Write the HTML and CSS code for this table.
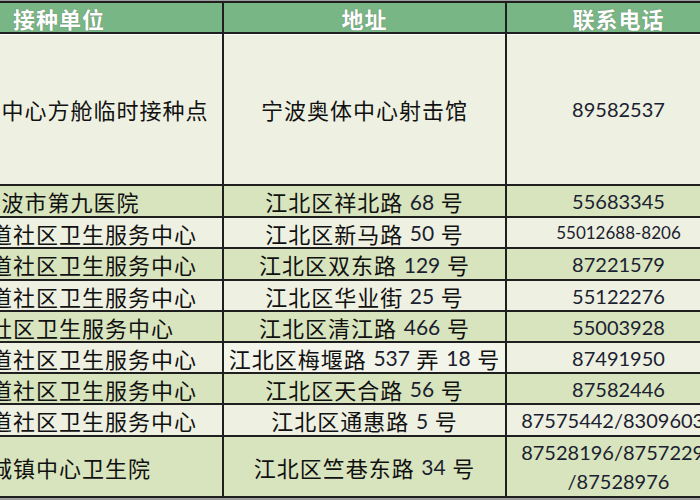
FILE: index.html
```html
<!DOCTYPE html>
<html lang="zh">
<head>
<meta charset="utf-8">
<title>接种单位</title>
<link rel="stylesheet" href="styles.css">
</head>
<body>
<div class="sheet">
  <div class="cell head">接种单位</div>
  <div class="cell head">地址</div>
  <div class="cell head">联系电话</div>

  <div class="cell light first">宁波奥体中心方舱临时接种点</div>
  <div class="cell light first">宁波奥体中心射击馆</div>
  <div class="cell light first num">89582537</div>

  <div class="cell green">宁波市第九医院</div>
  <div class="cell green">江北区祥北路 <span class="n">68</span> 号</div>
  <div class="cell green num">55683345</div>

  <div class="cell light">白沙街道社区卫生服务中心</div>
  <div class="cell light">江北区新马路 <span class="n">50</span> 号</div>
  <div class="cell light num small">55012688-8206</div>

  <div class="cell green">甬江街道社区卫生服务中心</div>
  <div class="cell green">江北区双东路 <span class="n">129</span> 号</div>
  <div class="cell green num">87221579</div>

  <div class="cell light">洪塘街道社区卫生服务中心</div>
  <div class="cell light">江北区华业街 <span class="n">25</span> 号</div>
  <div class="cell light num">55122276</div>

  <div class="cell green">孔浦社区卫生服务中心</div>
  <div class="cell green">江北区清江路 <span class="n">466</span> 号</div>
  <div class="cell green num">55003928</div>

  <div class="cell light">庄桥街道社区卫生服务中心</div>
  <div class="cell light pale">江北区梅堰路 <span class="n">537</span> 弄 <span class="n">18</span> 号</div>
  <div class="cell light num">87491950</div>

  <div class="cell green">文教街道社区卫生服务中心</div>
  <div class="cell green">江北区天合路 <span class="n">56</span> 号</div>
  <div class="cell green num">87582446</div>

  <div class="cell light">中马街道社区卫生服务中心</div>
  <div class="cell light">江北区通惠路 <span class="n">5</span> 号</div>
  <div class="cell light num">87575442/83096036</div>

  <div class="cell green">慈城镇中心卫生院</div>
  <div class="cell green">江北区竺巷东路 <span class="n">34</span> 号</div>
  <div class="cell green num two">87528196/87572296<br>/87528976</div>
</div>
</body>
</html>
```

FILE: styles.css
```css
html, body {
  margin: 0;
  padding: 0;
}
body {
  width: 700px;
  height: 500px;
  overflow: hidden;
  background: #9c9c9c;
  padding-top: 1px;
  box-sizing: border-box;
}
.sheet {
  display: grid;
  grid-template-columns: 326px 281px 223px;
  grid-template-rows: 29px 150px 30px 29px 30px 29px 29px 29px 29px 30px 59px;
  gap: 2px;
  background: #1f1f1f;
  border: 2px solid #1f1f1f;
  margin-left: -106px;
  width: max-content;
}
.cell {
  display: flex;
  align-items: center;
  justify-content: center;
  text-align: center;
  white-space: pre;
  font-family: "Lato", "Noto Sans CJK SC", sans-serif;
  font-size: 22px;
  letter-spacing: 1px;
  color: #111;
}
.head {
  background: #79b685;
  color: #ffffff;
  font-weight: bold;
  text-shadow: 0 0 1px #5a6f5a;
}
.light {
  background: #eef0e1;
}
.pale {
  background: #f3f4ea;
}
.green {
  background: #d8e4bd;
}
.first {
  box-shadow: inset 0 1px 0 #ffffff;
}
.n {
  font-size: 21px;
  letter-spacing: 0;
  color: #1a2130;
}
.num {
  font-size: 20px;
  letter-spacing: 0;
  color: #1a2130;
}
.small {
  font-size: 17px;
}
.two {
  white-space: nowrap;
  line-height: 29px;
}
```
